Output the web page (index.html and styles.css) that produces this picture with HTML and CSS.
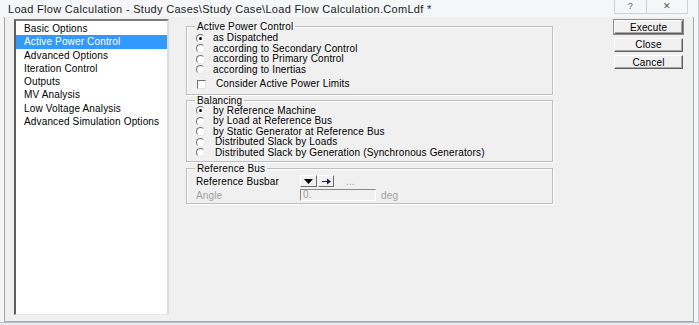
FILE: index.html
```html
<!DOCTYPE html>
<html lang="en">
<head>
    <meta charset="UTF-8">
    <title>Load Flow Calculation</title>
    <link rel="stylesheet" href="styles.css">
</head>
<body>
    <div class="window">
        <div class="titlebar">
            <span class="caption">Load Flow Calculation - Study Cases\Study Case\Load Flow Calculation.ComLdf *</span>
            <div class="caption-buttons">
                <span class="cap-help">?</span>
                <span class="cap-close">&#x2715;</span>
            </div>
        </div>

        <div class="dialog">
            <ul class="pages">
                <li>Basic Options</li>
                <li class="selected">Active Power Control</li>
                <li>Advanced Options</li>
                <li>Iteration Control</li>
                <li>Outputs</li>
                <li>MV Analysis</li>
                <li>Low Voltage Analysis</li>
                <li>Advanced Simulation Options</li>
            </ul>

            <div class="content">
                <fieldset class="group group-power">
                    <legend>Active Power Control</legend>
                    <div class="row"><span class="radio checked"></span>as Dispatched</div>
                    <div class="row"><span class="radio"></span>according to Secondary Control</div>
                    <div class="row"><span class="radio"></span>according to Primary Control</div>
                    <div class="row"><span class="radio"></span>according to Inertias</div>
                    <div class="row row-check"><span class="check"></span>Consider Active Power Limits</div>
                </fieldset>

                <fieldset class="group group-balancing">
                    <legend>Balancing</legend>
                    <div class="row"><span class="radio checked"></span>by Reference Machine</div>
                    <div class="row"><span class="radio"></span>by Load at Reference Bus</div>
                    <div class="row"><span class="radio"></span>by Static Generator at Reference Bus</div>
                    <div class="row row-wide"><span class="radio"></span>Distributed Slack by Loads</div>
                    <div class="row row-wide"><span class="radio"></span>Distributed Slack by Generation (Synchronous Generators)</div>
                </fieldset>

                <fieldset class="group group-bus">
                    <legend>Reference Bus</legend>
                    <div class="field">
                        <span class="field-label">Reference Busbar</span>
                        <span class="tool tool-drop"><svg width="9" height="5" viewBox="0 0 9 5"><path d="M0 0h9L4.5 5z" fill="#000"/></svg></span>
                        <span class="tool tool-jump"><svg width="9" height="7" viewBox="0 0 9 7"><path d="M0 3h5V0.5L9 3.5 5 6.5V4H0z" fill="#1a1a5e"/></svg></span>
                        <span class="more">...</span>
                    </div>
                    <div class="field disabled">
                        <span class="field-label">Angle</span>
                        <span class="input">0.</span>
                        <span class="unit">deg</span>
                    </div>
                </fieldset>
            </div>

            <div class="actions">
                <button class="button default">Execute</button>
                <button class="button">Close</button>
                <button class="button">Cancel</button>
            </div>
        </div>
    </div>
</body>
</html>
```

FILE: styles.css
```css
/* Load flow dialog, classic look */

body {
    margin: 0;
    width: 699px;
    height: 325px;
    overflow: hidden;
    background: #e6ecf2;
    font-family: "Liberation Sans", Arial, sans-serif;
    color: #000;
}

.window {
    height: 323px;
    display: flex;
    flex-direction: column;
    background: #f4f6f8;
    border-right: 1px solid #c8ced4;
    border-bottom: 1px solid #b9c0c6;
    box-sizing: border-box;
}

.titlebar {
    height: 17px;
    display: flex;
    align-items: flex-start;
    padding-left: 8px;
    font-size: 11px;
    letter-spacing: 0.3px;
    color: #1b1b1b;
}

.caption {
    margin-top: 3px;
}

.caption-buttons {
    margin-left: auto;
    margin-right: 10px;
    display: flex;
}

.caption-buttons span {
    height: 13px;
    border: 1px solid #cfd3d7;
    border-top: none;
    font-size: 9px;
    line-height: 13px;
    text-align: center;
    color: #555;
}

.cap-help {
    width: 31px;
}

.cap-close {
    width: 40px;
    border-left: none !important;
}

.dialog {
    flex: 1;
    display: flex;
    margin-left: 4px;
    margin-right: 4px;
    padding: 2px 0 6px 9px;
    background: #f0f0f0;
    border: 1px solid #a8a8a8;
    border-top: none;
    font-size: 10px;
    letter-spacing: 0.15px;
}

.pages {
    list-style: none;
    margin: 0;
    padding: 1px 0 0 0;
    width: 151px;
    background: #fff;
    border-top: 2px solid #7a7a7a;
    border-left: 2px solid #5e5e5e;
    border-right: 2px solid #dcdcdc;
    border-bottom: 1px solid #e8e8e8;
}

.pages li {
    height: 13.3px;
    line-height: 13.3px;
    padding-left: 8px;
    white-space: nowrap;
}

.pages .selected {
    background: #3399ff;
    color: #fff;
}

.content {
    width: 367px;
    margin-left: 17px;
    margin-top: 2px;
    display: flex;
    flex-direction: column;
}

.group {
    margin: 0;
    padding: 0 0 3px 9px;
    border: 1px solid #bdbdbd;
    box-shadow: 1px 1px 0 #fff, inset 1px 1px 0 #fff;
    min-width: 0;
}

.group legend {
    margin-left: -1px;
    padding: 0 2px;
    line-height: 11px;
}

.group-power {
    padding-top: 1px;
    padding-bottom: 4px;
}

.group-balancing {
    padding-top: 0;
    padding-bottom: 3px;
}

.group-bus {
    margin-top: 1px;
    padding-bottom: 2px;
}

.row {
    height: 10.5px;
    line-height: 10.5px;
    display: flex;
    align-items: center;
    white-space: nowrap;
}

.row-check {
    margin-top: 4px;
}

.radio {
    width: 7px;
    height: 7px;
    margin-right: 8px;
    border-radius: 50%;
    border: 1px solid;
    border-color: #6f6f6f #e6e6e6 #e6e6e6 #6f6f6f;
    background: #fff;
    position: relative;
    flex: none;
}

.row-wide .radio {
    margin-right: 10px;
}

.radio.checked::after {
    content: "";
    position: absolute;
    left: 2px;
    top: 2px;
    width: 3px;
    height: 3px;
    border-radius: 50%;
    background: #000;
}

.check {
    width: 7px;
    height: 7px;
    margin-left: 1px;
    margin-right: 10px;
    border: 1px solid;
    border-color: #6f6f6f #e6e6e6 #e6e6e6 #6f6f6f;
    background: #fff;
    flex: none;
}

.field {
    height: 12px;
    display: flex;
    align-items: center;
    margin-top: 1px;
}

.field + .field {
    margin-top: 2px;
}

.field-label {
    width: 104px;
}

.tool {
    width: 14px;
    height: 10px;
    margin-right: 1px;
    display: flex;
    align-items: center;
    justify-content: center;
    background: #f0f0f0;
    border: 1px solid;
    border-color: #fff #6d6d6d #6d6d6d #fff;
}

.tool-drop {
    width: 15px;
}

.more {
    margin-left: 11px;
    color: #a0a0a0;
}

.disabled {
    color: #a0a0a0;
}

.input {
    width: 72px;
    height: 10px;
    line-height: 10px;
    padding-left: 2px;
    border: 1px solid;
    border-color: #8a8a8a #fff #fff #8a8a8a;
    background: #f0f0f0;
}

.unit {
    margin-left: 5px;
}

.actions {
    margin-left: 61px;
    margin-top: 1px;
    display: flex;
    flex-direction: column;
    gap: 3.5px;
}

.button {
    width: 69px;
    height: 14px;
    padding: 0;
    font: 10px "Liberation Sans", Arial, sans-serif;
    letter-spacing: 0.15px;
    color: #000;
    background: #f0f0f0;
    border: 1px solid;
    border-color: #fff #5f5f5f #5f5f5f #fff;
    box-shadow: inset -1px -1px 0 #a8a8a8;
}

.button.default {
    outline: 1px solid #8c8c8c;
    outline-offset: 0;
}
```
